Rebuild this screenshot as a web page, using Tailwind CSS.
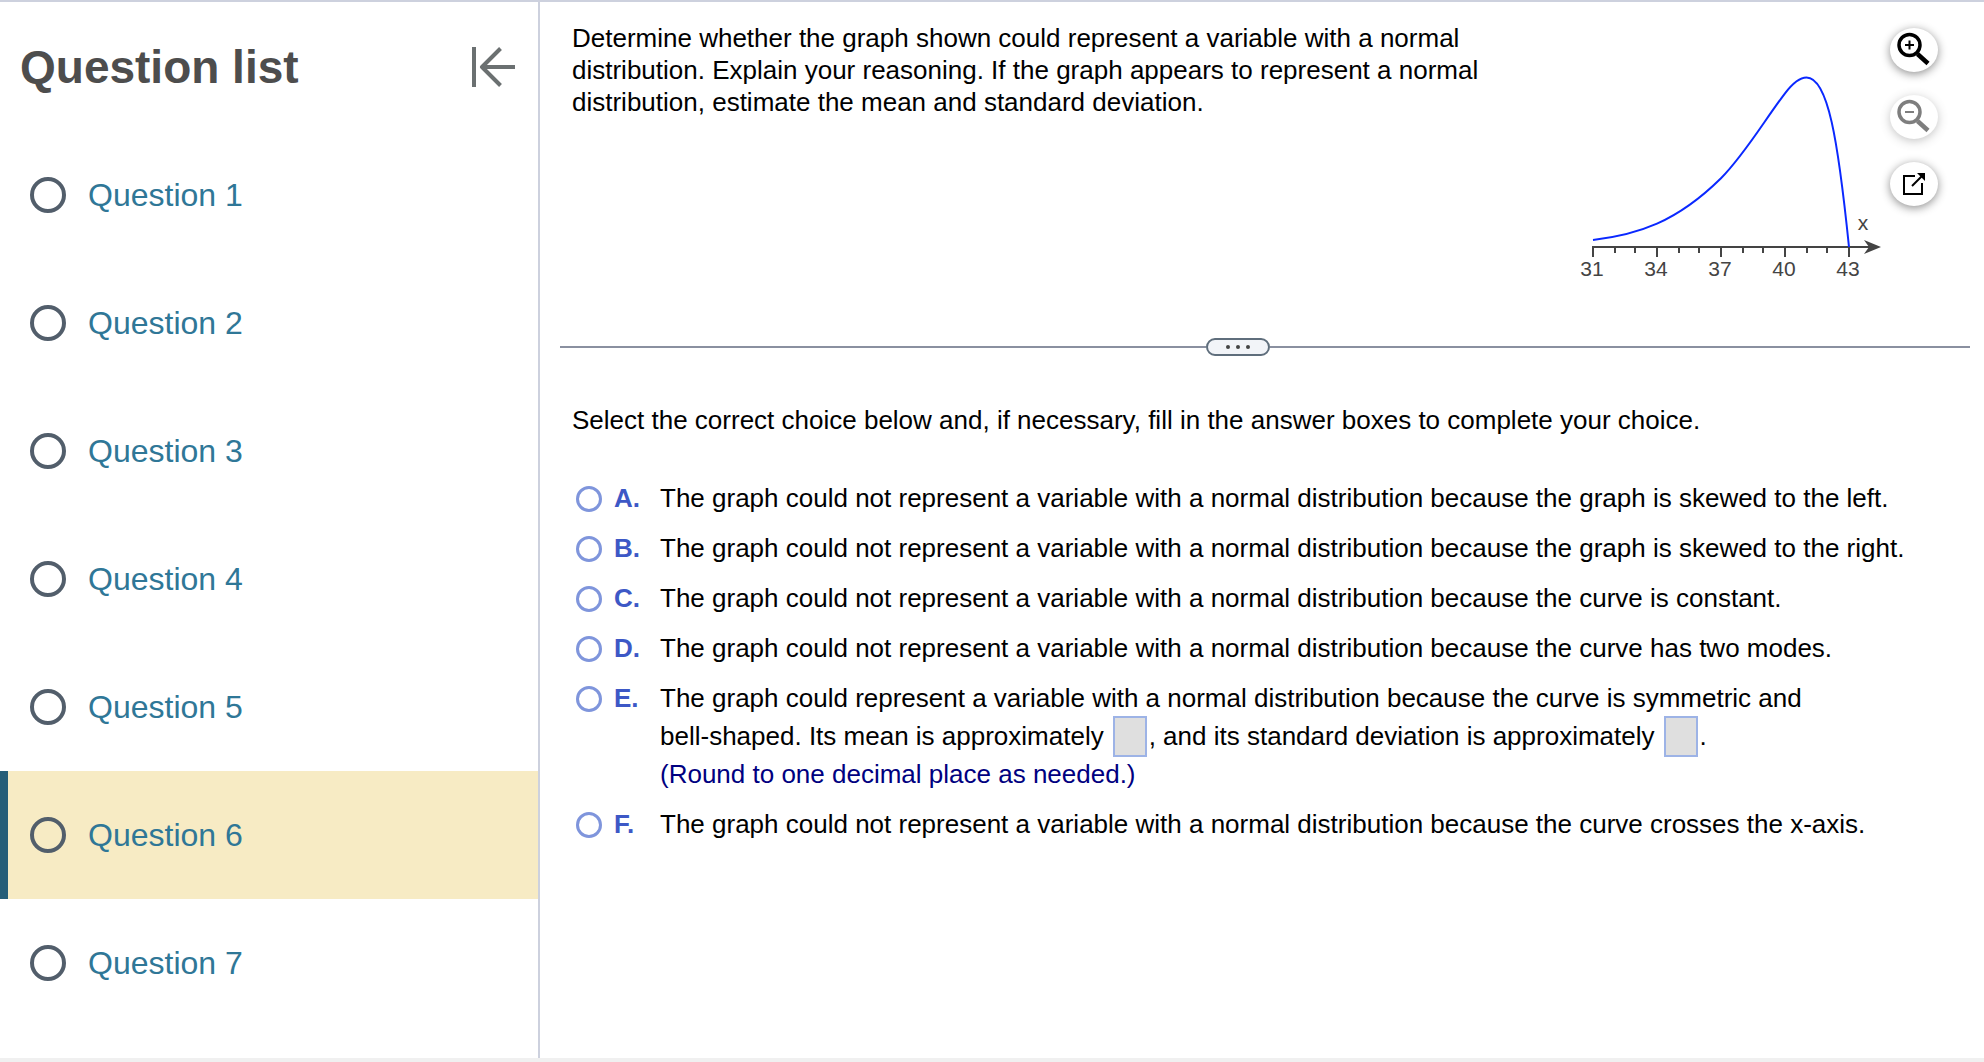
<!DOCTYPE html>
<html lang="en">
  <head>
    <meta charset="UTF-8" />
    <meta name="viewport" content="width=device-width, initial-scale=1.0" />
    <title>Question list</title>
    <script src="https://cdn.jsdelivr.net/npm/@tailwindcss/browser@4"></script>
  </head>
  <body class="font-['Liberation_Sans',Arial,sans-serif] bg-white text-black">
    <div class="flex min-h-screen border-t-2 border-[#cdd1de] border-b-4 border-b-[#f0f0f0]">
      <!-- Sidebar -->
      <aside class="w-[540px] shrink-0 border-r-2 border-[#cdd1de]">
        <div class="flex items-center justify-between h-[129px] pl-5 pr-[18px]">
          <h1 class="text-[46px] leading-[52px] font-bold text-[#4d4d4d]">Question list</h1>
          <button type="button" aria-label="Collapse question list" class="w-12 h-12">
            <svg class="w-12 h-12" viewBox="0 0 48 48" fill="none" stroke="#6b7071" stroke-width="4" stroke-linejoin="round">
              <path d="M2 4V44" />
              <path d="M43 24H10M28.500 5.500L10 24L28.500 42.500" />
            </svg>
          </button>
        </div>
        <nav>
          <ul class="text-[32px] leading-9 text-[#2f7797]">
            <li><a href="#q1" class="flex items-center gap-[22px] h-32 pl-[30px]"><span class="w-9 h-9 rounded-full border-4 border-[#525e6b]"></span>Question 1</a></li>
            <li><a href="#q2" class="flex items-center gap-[22px] h-32 pl-[30px]"><span class="w-9 h-9 rounded-full border-4 border-[#525e6b]"></span>Question 2</a></li>
            <li><a href="#q3" class="flex items-center gap-[22px] h-32 pl-[30px]"><span class="w-9 h-9 rounded-full border-4 border-[#525e6b]"></span>Question 3</a></li>
            <li><a href="#q4" class="flex items-center gap-[22px] h-32 pl-[30px]"><span class="w-9 h-9 rounded-full border-4 border-[#525e6b]"></span>Question 4</a></li>
            <li><a href="#q5" class="flex items-center gap-[22px] h-32 pl-[30px]"><span class="w-9 h-9 rounded-full border-4 border-[#525e6b]"></span>Question 5</a></li>
            <li><a href="#q6" aria-current="page" class="flex items-center gap-[22px] h-32 pl-[22px] border-l-8 border-[#265e78] bg-[#f7ebc4]"><span class="w-9 h-9 rounded-full border-4 border-[#525e6b]"></span>Question 6</a></li>
            <li><a href="#q7" class="flex items-center gap-[22px] h-32 pl-[30px]"><span class="w-9 h-9 rounded-full border-4 border-[#525e6b]"></span>Question 7</a></li>
          </ul>
        </nav>
      </aside>

      <!-- Question -->
      <main class="flex-1 min-w-0 pl-5 pr-3.5 text-[26px] leading-8">
        <div class="flex items-start pl-3 pr-8">
          <p class="mt-5 max-w-[920px]">Determine whether the graph shown could represent a variable with a normal distribution. Explain your reasoning. If the graph appears to represent a normal distribution, estimate the mean and standard deviation.</p>
          <svg class="w-[340px] h-[240px] mt-12 ml-auto shrink-0" viewBox="0 0 340 240" role="img" aria-label="Density curve over x from 31 to 43">
            <g stroke="#444" stroke-width="2" fill="none">
              <path d="M32 197H310" />
              <path d="M33 197V207M97 197V207M161 197V207M225 197V207M289 197V207" />
              <path d="M55 197V203M75 197V203M119 197V203M139 197V203M183 197V203M203 197V203M247 197V203M267 197V203" />
            </g>
            <path d="M321 197L304 190L309 197L304 204Z" fill="#444" />
            <path d="M33 190C55 187.500 77 182.500 97 173.700C120 163.500 141 148 161 128.300C185 104 204 71 225 43.300C231 35.500 238.500 27.500 246.500 27.500C268 27.500 278 90 289 197" fill="none" stroke="#0a28ff" stroke-width="2" />
            <g fill="#444" font-size="21" text-anchor="middle">
              <text x="32" y="226">31</text>
              <text x="96" y="226">34</text>
              <text x="160" y="226">37</text>
              <text x="224" y="226">40</text>
              <text x="288" y="226">43</text>
              <text x="303" y="180">x</text>
            </g>
          </svg>
          <div class="flex flex-col gap-[23px] mt-[26px] -ml-2.5">
            <button type="button" aria-label="Zoom in" class="w-12 h-11 rounded-[50%] bg-white shadow-[0_2px_10px_rgba(0,0,0,0.45)]">
              <svg class="w-12 h-11" viewBox="0 0 48 44" fill="none" stroke="#000">
                <circle cx="19.500" cy="17" r="10.500" stroke-width="3.500" />
                <path d="M27.500 26L38 35.500" stroke-width="4.500" />
                <path d="M15 17H24M19.500 12.500V21.500" stroke-width="2" />
              </svg>
            </button>
            <button type="button" aria-label="Zoom out" disabled class="w-12 h-11 rounded-[50%] bg-white opacity-50 shadow-[0_2px_10px_rgba(0,0,0,0.45)]">
              <svg class="w-12 h-11" viewBox="0 0 48 44" fill="none" stroke="#000">
                <circle cx="19.500" cy="17" r="10.500" stroke-width="3.500" />
                <path d="M27.500 26L38 35.500" stroke-width="4.500" />
                <path d="M15 17H24" stroke-width="2" />
              </svg>
            </button>
            <button type="button" aria-label="Open in new window" class="w-12 h-11 rounded-[50%] bg-white shadow-[0_2px_10px_rgba(0,0,0,0.45)]">
              <svg class="w-12 h-11" viewBox="0 0 48 44" fill="none" stroke="#000" stroke-width="2">
                <path d="M25 14H14V32H32V21" />
                <path d="M22 24L32 14" />
                <path d="M27 11H35V19Z" fill="#000" stroke="none" />
              </svg>
            </button>
          </div>
        </div>

        <div class="flex items-center mt-12">
          <hr class="flex-[48] border-t-2 border-[#8a90a0]" />
          <button type="button" aria-label="Resize panes" class="flex items-center justify-center gap-[6px] w-16 h-[18px] rounded-full border-2 border-[#5f6e7c] bg-[#f2f4f8]">
            <span class="w-1 h-1 rounded-full bg-[#444]"></span>
            <span class="w-1 h-1 rounded-full bg-[#444]"></span>
            <span class="w-1 h-1 rounded-full bg-[#444]"></span>
          </button>
          <hr class="flex-[52] border-t-2 border-[#8a90a0]" />
        </div>

        <form class="pl-3">
          <fieldset>
            <legend class="pt-12">Select the correct choice below and, if necessary, fill in the answer boxes to complete your choice.</legend>
            <div class="flex flex-col gap-[18px] mt-[46px]">
              <div class="flex items-start">
                <input type="radio" name="choice" id="a" class="appearance-none shrink-0 w-[26px] h-[26px] mt-1 ml-1 rounded-full border-3 border-[#7f95dc]" />
                <label for="a" class="flex ml-3"><b class="w-[46px] shrink-0 text-[#3d58c6]">A.</b>The graph could not represent a variable with a normal distribution because the graph is skewed to the left.</label>
              </div>
              <div class="flex items-start">
                <input type="radio" name="choice" id="b" class="appearance-none shrink-0 w-[26px] h-[26px] mt-1 ml-1 rounded-full border-3 border-[#7f95dc]" />
                <label for="b" class="flex ml-3"><b class="w-[46px] shrink-0 text-[#3d58c6]">B.</b>The graph could not represent a variable with a normal distribution because the graph is skewed to the right.</label>
              </div>
              <div class="flex items-start">
                <input type="radio" name="choice" id="c" class="appearance-none shrink-0 w-[26px] h-[26px] mt-1 ml-1 rounded-full border-3 border-[#7f95dc]" />
                <label for="c" class="flex ml-3"><b class="w-[46px] shrink-0 text-[#3d58c6]">C.</b>The graph could not represent a variable with a normal distribution because the curve is constant.</label>
              </div>
              <div class="flex items-start">
                <input type="radio" name="choice" id="d" class="appearance-none shrink-0 w-[26px] h-[26px] mt-1 ml-1 rounded-full border-3 border-[#7f95dc]" />
                <label for="d" class="flex ml-3"><b class="w-[46px] shrink-0 text-[#3d58c6]">D.</b>The graph could not represent a variable with a normal distribution because the curve has two modes.</label>
              </div>
              <div class="flex items-start">
                <input type="radio" name="choice" id="e" class="appearance-none shrink-0 w-[26px] h-[26px] mt-1 ml-1 rounded-full border-3 border-[#7f95dc]" />
                <label for="e" class="ml-3 w-[46px] shrink-0 font-bold text-[#3d58c6]">E.</label>
                <div>
                  <p>The graph could represent a variable with a normal distribution because the curve is symmetric and</p>
                  <div class="flex items-center h-11">
                    <label for="mean">bell-shaped. Its mean is approximately</label>
                    <input type="text" id="mean" class="w-[34px] h-[41px] ml-[9px] mr-0.5 border-2 border-[#9db3e6] bg-[#dfdfdf]" />
                    <label for="sd">, and its standard deviation is approximately</label>
                    <input type="text" id="sd" class="w-[34px] h-[41px] ml-[9px] mr-0.5 border-2 border-[#9db3e6] bg-[#dfdfdf]" />
                    <span>.</span>
                  </div>
                  <p class="text-[#000080]">(Round to one decimal place as needed.)</p>
                </div>
              </div>
              <div class="flex items-start">
                <input type="radio" name="choice" id="f" class="appearance-none shrink-0 w-[26px] h-[26px] mt-1 ml-1 rounded-full border-3 border-[#7f95dc]" />
                <label for="f" class="flex ml-3"><b class="w-[46px] shrink-0 text-[#3d58c6]">F.</b>The graph could not represent a variable with a normal distribution because the curve crosses the x-axis.</label>
              </div>
            </div>
          </fieldset>
        </form>
      </main>
    </div>
  </body>
</html>
